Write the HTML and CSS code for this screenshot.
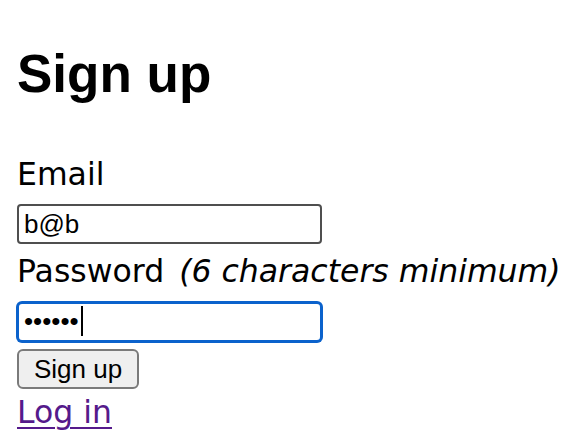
FILE: index.html
```html
<!DOCTYPE html>
<html lang="en">
<head>
    <meta charset="UTF-8">
    <meta name="viewport" content="width=device-width, initial-scale=1.0">
    <title>Sign up</title>
    <link rel="stylesheet" href="styles.css">
</head>
<body>
    <h1 class="title">Sign up</h1>

    <form class="signup" action="#">
        <div class="field">
            <label for="user_email">Email</label>
            <input type="email" id="user_email" class="text-input" value="b@b">
        </div>

        <div class="field">
            <label for="user_password">Password <em>(6 characters minimum)</em></label>
            <div class="input-wrap">
                <input type="password" id="user_password" class="text-input focused" value="bbbbbb">
                <span class="caret"></span>
            </div>
        </div>

        <div class="actions">
            <input type="submit" class="btn" value="Sign up">
        </div>
    </form>

    <a href="#" class="login-link">Log in</a>
</body>
</html>
```

FILE: styles.css
```css
/* reset */
body {
    margin: 0;
    padding: 0 17px;
    font-family: "DejaVu Sans", sans-serif;
    font-size: 31.5px;
    color: #000;
    background: #fff;
}

/* heading */
.title {
    margin: 44px 0 52px;
    font-family: "Liberation Sans", Arial, sans-serif;
    font-size: 53px;
    font-weight: bold;
    line-height: 60px;
}

/* form */
.signup {
    display: flex;
    flex-direction: column;
    align-items: flex-start;
}
.field {
    display: flex;
    flex-direction: column;
    align-items: flex-start;
    margin-bottom: 9px;
}
.field label {
    display: block;
    white-space: nowrap;
    line-height: 36px;
    margin-bottom: 12px;
}
.field em {
    margin-left: 5px;
}
.text-input {
    box-sizing: border-box;
    width: 305px;
    height: 40px;
    margin: 0;
    padding: 0 5px;
    border: 2px solid #4f4f4f;
    border-radius: 4px;
    font-family: "Liberation Sans", Arial, sans-serif;
    font-size: 26px;
    color: #000;
    background: #fff;
    outline: none;
}
.text-input.focused {
    border: 2px solid #0b62cc;
    border-radius: 5px;
    box-shadow: 0 0 0 1px #0b62cc;
}
.input-wrap {
    position: relative;
}
.caret {
    position: absolute;
    left: 64px;
    top: 5px;
    width: 2px;
    height: 30px;
    background: #000;
}

/* button */
.actions {
    margin-top: -2px;
}
.btn {
    box-sizing: border-box;
    height: 40px;
    margin: 0;
    padding: 0 15px;
    border: 2px solid #7a7a7a;
    border-radius: 6px;
    background: #efefef;
    font-family: "Liberation Sans", Arial, sans-serif;
    font-size: 26px;
    color: #000;
}

/* link */
.login-link {
    display: inline-block;
    margin-top: 5px;
    line-height: 36px;
    color: #551a8b;
    text-decoration: underline;
    text-underline-offset: 4px;
    text-decoration-thickness: 2px;
}
```
